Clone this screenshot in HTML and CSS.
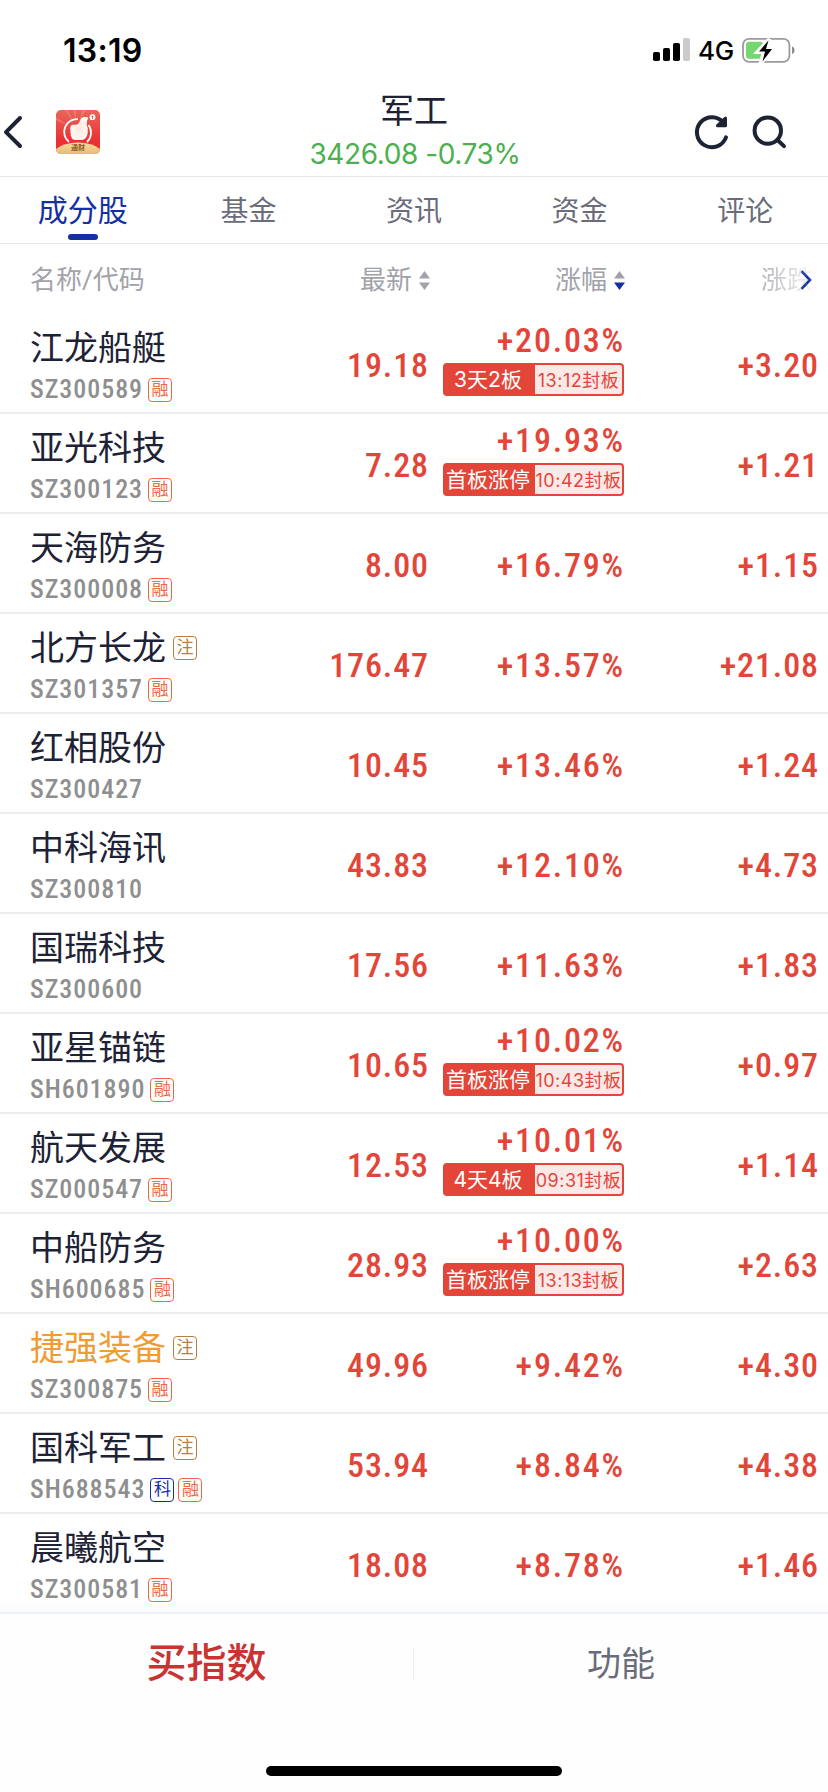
FILE: index.html
```html
<!DOCTYPE html>
<html lang="zh-CN">
<head>
    <meta charset="UTF-8">
    <meta name="viewport" content="width=device-width, initial-scale=1.0">
    <title>军工</title>
    <link rel="stylesheet" href="styles.css">
</head>
<body>

    <!-- Status bar -->
    <div class="status-bar">
        <span class="time">13:19</span>
        <div class="status-right">
            <svg width="37" height="24" viewBox="0 0 37 24">
                <rect x="0" y="14" width="7" height="9" rx="1.8"/>
                <rect x="10" y="10" width="7" height="13" rx="1.8"/>
                <rect x="20" y="5" width="7" height="18" rx="1.8"/>
                <rect x="30" y="0" width="7" height="23" rx="1.8" fill="#cbcbcb"/>
            </svg>
            <span class="network">4G</span>
            <svg class="battery" width="54" height="30" viewBox="0 0 54 30">
                <rect x="1" y="3.8" width="46.4" height="23" rx="6" fill="none" stroke="#9b9b9b" stroke-width="1.8"/>
                <path d="M50 11.5c3.4 1 3.4 6.5 0 7.500z" fill="#8c8c8c"/>
                <rect x="4" y="6.800" width="17.500" height="17" rx="3.400" fill="#76d672"/>
                <path d="M27.500 4L15.500 17h6.500L18.500 28.500 31 14h-6.500z" fill="#000" stroke="#fff" stroke-width="4"/>
                <path d="M26.500 5.500L17 16.500h6L20.500 26.500 30 14h-6z" fill="#000"/>
            </svg>
        </div>
    </div>

    <!-- Header -->
    <header class="header">
        <div class="header-side">
            <svg width="24" height="40" viewBox="0 0 24 40" fill="none" stroke="#1e2235" stroke-width="4" stroke-linecap="round" stroke-linejoin="round">
                <path d="M20 6L6 20.200 20 34"/>
            </svg>
            <div class="app-logo">
                <svg width="44" height="44" viewBox="0 0 44 44">
                    <defs>
                        <linearGradient id="logoRed" x1="0" y1="0" x2="0" y2="1">
                            <stop offset="0" stop-color="#e9665a"/>
                            <stop offset="0.7" stop-color="#eb3035"/>
                        </linearGradient>
                        <linearGradient id="logoGold" x1="0" y1="0" x2="0" y2="1">
                            <stop offset="0" stop-color="#f8d9a0"/>
                            <stop offset="1" stop-color="#e5bb76"/>
                        </linearGradient>
                        <radialGradient id="logoHand">
                            <stop offset="0" stop-color="#fee6d8"/>
                            <stop offset="1" stop-color="#fffaf6"/>
                        </radialGradient>
                    </defs>
                    <rect width="44" height="44" rx="5" fill="url(#logoRed)"/>
                    <path d="M18 14L9 0h3zM20 11L17 0h3zM24 10L26 0h4zM14 17L0 7v3z" fill="#f0887c" opacity="0.6"/>
                    <path d="M22 9.200A12.800 12.800 0 0 0 13 32M32.500 15A12.800 12.800 0 0 1 31 32" fill="none" stroke="#fff" stroke-width="1.800"/>
                    <path d="M14.500 17q0-2 2-2.200h4q3-1 3.500-4.500 1-3 4-3.300 4-.500 4.200 1-2 3-1.500 7 1.500 3 1 6 .200 5-2.500 7.500-1.500 1.500-5 1.500h-4.500q-4 0-4.200-3-1.500-1.500-.500-3-1.500-1.500-.300-3-1-2-.200-4z" fill="url(#logoHand)"/>
                    <circle cx="36.500" cy="7.200" r="2.900" fill="#fff"/>
                    <path d="M35.200 7h2.600L36.500 5.400zM36.100 7h.8v2h-.8z" fill="#eb4b47"/>
                    <path d="M0 39Q8 32.500 22 32.500T44 39q0 5-5 5H5q-5 0-5-5z" fill="url(#logoGold)"/>
                </svg>
                <span class="logo-text">通财</span>
            </div>
        </div>
        <div class="header-title">
            <h1>军工</h1>
            <p>3426.08 -0.73%</p>
        </div>
        <div class="header-side header-actions">
            <svg width="40" height="40" viewBox="0 0 40 40" fill="none" stroke="#1e2235" stroke-width="4" stroke-linecap="round" stroke-linejoin="round">
                <path d="M34 25.400A15 15 0 1 1 31.600 10.800"/>
                <path d="M33.500 6.200v7.500h-8z" fill="#1e2235" stroke-width="3"/>
            </svg>
            <svg width="40" height="40" viewBox="0 0 40 40" fill="none" stroke="#1e2235" stroke-width="4" stroke-linecap="round">
                <circle cx="18.800" cy="18.600" r="13.200"/>
                <path d="M29 28.500l6 5.600"/>
            </svg>
        </div>
    </header>

    <!-- Tabs -->
    <nav class="tabs">
        <a class="tab active">成分股</a>
        <a class="tab">基金</a>
        <a class="tab">资讯</a>
        <a class="tab">资金</a>
        <a class="tab">评论</a>
    </nav>

    <!-- Table head -->
    <div class="table-head">
        <span>名称/代码</span>
        <span class="sort">最新
            <svg width="11" height="19" viewBox="0 0 11 19"><path d="M5.500 0L11 7.500H0z"/><path d="M5.500 19L11 11.500H0z"/></svg>
        </span>
        <span class="sort">涨幅
            <svg width="11" height="19" viewBox="0 0 11 19"><path d="M5.500 0L11 7.500H0z"/><path class="on" d="M5.500 19L11 11.500H0z"/></svg>
        </span>
        <span class="more">
            <span class="fade">涨跌</span>
            <svg width="12" height="20" viewBox="0 0 12 20" fill="none" stroke="#1330a4" stroke-width="2.600"><path d="M1.500 1.200L10 10 1.500 18.800"/></svg>
        </span>
    </div>

    <div class="list" id="list"></div>

    <!-- Bottom bar -->
    <footer class="footer">
        <div class="actions">
            <a class="buy">买指数</a>
            <a class="func">功能</a>
        </div>
        <div class="home-indicator"></div>
    </footer>

    <script>
        var stocks = [
            { name: '江龙船艇', code: 'SZ300589', marks: ['融'], price: '19.18', pct: '+20.03%', diff: '+3.20', board: ['3天2板', '13:12封板'] },
            { name: '亚光科技', code: 'SZ300123', marks: ['融'], price: '7.28', pct: '+19.93%', diff: '+1.21', board: ['首板涨停', '10:42封板'] },
            { name: '天海防务', code: 'SZ300008', marks: ['融'], price: '8.00', pct: '+16.79%', diff: '+1.15' },
            { name: '北方长龙', note: true, code: 'SZ301357', marks: ['融'], price: '176.47', pct: '+13.57%', diff: '+21.08' },
            { name: '红相股份', code: 'SZ300427', marks: [], price: '10.45', pct: '+13.46%', diff: '+1.24' },
            { name: '中科海讯', code: 'SZ300810', marks: [], price: '43.83', pct: '+12.10%', diff: '+4.73' },
            { name: '国瑞科技', code: 'SZ300600', marks: [], price: '17.56', pct: '+11.63%', diff: '+1.83' },
            { name: '亚星锚链', code: 'SH601890', marks: ['融'], price: '10.65', pct: '+10.02%', diff: '+0.97', board: ['首板涨停', '10:43封板'] },
            { name: '航天发展', code: 'SZ000547', marks: ['融'], price: '12.53', pct: '+10.01%', diff: '+1.14', board: ['4天4板', '09:31封板'] },
            { name: '中船防务', code: 'SH600685', marks: ['融'], price: '28.93', pct: '+10.00%', diff: '+2.63', board: ['首板涨停', '13:13封板'] },
            { name: '捷强装备', own: true, note: true, code: 'SZ300875', marks: ['融'], price: '49.96', pct: '+9.42%', diff: '+4.30' },
            { name: '国科军工', note: true, code: 'SH688543', marks: ['科', '融'], price: '53.94', pct: '+8.84%', diff: '+4.38' },
            { name: '晨曦航空', code: 'SZ300581', marks: ['融'], price: '18.08', pct: '+8.78%', diff: '+1.46' }
        ];

        var markClass = { '融': 'rong', '科': 'ke' };

        document.getElementById('list').innerHTML = stocks.map(function (s) {
            var marks = s.marks.map(function (m) {
                return '<i class="mark ' + markClass[m] + '">' + m + '</i>';
            }).join('');
            var board = s.board
                ? '<div class="board"><b>' + s.board[0] + '</b><em>' + s.board[1] + '</em></div>'
                : '';
            return '<div class="row">' +
                '<div class="stock">' +
                    '<div class="name' + (s.own ? ' own' : '') + '">' + s.name + (s.note ? '<i class="mark zhu">注</i>' : '') + '</div>' +
                    '<div class="code"><span>' + s.code + '</span>' + marks + '</div>' +
                '</div>' +
                '<div class="num">' + s.price + '</div>' +
                '<div class="num pct">' + s.pct + board + '</div>' +
                '<div class="num">' + s.diff + '</div>' +
            '</div>';
        }).join('');
    </script>

</body>
</html>
```

FILE: styles.css
```css
* {
    box-sizing: border-box;
    margin: 0;
    padding: 0;
}
body {
    width: 828px;
    height: 1792px;
    overflow: hidden;
    background-color: #fff;
    color: #1e2235;
    font-family: Roboto, "Noto Sans CJK SC", sans-serif;
    display: flex;
    flex-direction: column;
}
svg {
    display: block;
    flex: none;
}
i, em {
    font-style: normal;
}

/* Status bar */
.status-bar {
    height: 88px;
    padding: 12px 32px 0 63px;
    display: flex;
    align-items: center;
    justify-content: space-between;
    font-family: Inter, sans-serif;
    color: #000;
}
.time {
    font-size: 32px;
    font-weight: 600;
    letter-spacing: 0.3px;
}
.status-right {
    display: flex;
    align-items: center;
}
.network {
    font-size: 26px;
    font-weight: 500;
    letter-spacing: -0.3px;
    margin: 0 8px 0 8px;
}

/* Header */
.header {
    height: 89px;
    display: flex;
    border-bottom: 1px solid #e6e6e6;
}
.header-side {
    width: 240px;
    padding-top: 24px;
    display: flex;
    align-items: flex-start;
}
.app-logo {
    position: relative;
    margin: -2px 0 0 32px;
}
.logo-text {
    position: absolute;
    left: 0;
    right: 0;
    top: 33px;
    font-size: 7px;
    line-height: 10px;
    font-weight: 700;
    text-align: center;
    color: #8d5a25;
}
.header-title {
    flex: 1;
    padding-top: 1px;
    text-align: center;
}
h1 {
    font-size: 34px;
    line-height: 44px;
    font-weight: 400;
}
.header-title p {
    font-family: Inter, sans-serif;
    font-size: 28px;
    line-height: 43px;
    letter-spacing: -0.4px;
    padding-left: 2px;
    color: #4caf50;
}
.header-actions {
    justify-content: flex-end;
    gap: 17px;
    padding-right: 39px;
}

/* Tabs */
.tabs {
    height: 67px;
    display: grid;
    grid-template-columns: repeat(5, 1fr);
    border-bottom: 1px solid #e6e6e6;
}
.tab {
    display: flex;
    flex-direction: column;
    align-items: center;
    font-size: 28px;
    line-height: 69px;
    font-weight: 400;
    color: #6b6c7a;
}
.tab.active {
    font-size: 30px;
    line-height: 67px;
    color: #1330a4;
}
.tab.active::after {
    content: "";
    width: 30px;
    height: 6px;
    margin-top: -10px;
    border-radius: 3px;
    background-color: #1330a4;
}

/* Table */
.table-head,
.row {
    display: grid;
    grid-template-columns: 270px 127px 195px 195px;
    padding-left: 30px;
}
.table-head {
    height: 70px;
    font-size: 26px;
    line-height: 72px;
    font-weight: 400;
    color: #a2a2a9;
}
.sort {
    display: flex;
    align-items: center;
    justify-content: flex-end;
    gap: 7px;
    margin-right: -3px;
}
.sort svg {
    fill: #a2a2a9;
}
.sort .on {
    fill: #1330a4;
}
.more {
    display: flex;
    align-items: center;
    justify-content: flex-end;
    padding-right: 5px;
}
.more svg {
    margin-left: -13px;
}
.fade {
    -webkit-mask-image: linear-gradient(90deg, rgba(0, 0, 0, 0.8), rgba(0, 0, 0, 0.1));
    mask-image: linear-gradient(90deg, rgba(0, 0, 0, 0.8), rgba(0, 0, 0, 0.1));
}
.row {
    height: 100px;
    border-bottom: 2px solid #ededed;
}
.row:last-child {
    border-bottom-color: #eff0f3;
    background: linear-gradient(#fff 85%, #fafbfd);
}
.name {
    display: flex;
    align-items: center;
    height: 40px;
    margin-top: 14px;
    font-size: 34px;
    line-height: 38px;
    font-weight: 400;
}
.name.own {
    color: #ee9c33;
}
.name .mark {
    margin: 0 0 0 7px;
}
.code {
    display: flex;
    align-items: center;
    gap: 4px;
    height: 30px;
    margin-top: 7px;
    font-size: 26px;
    font-weight: 500;
    font-stretch: 85%;
    letter-spacing: 0.95px;
    color: #8f8f8f;
}
.code span {
    margin: -2px 1px 0 0;
}
.mark {
    width: 24px;
    height: 24px;
    border: 1px solid;
    border-radius: 4px;
    font-size: 17px;
    line-height: 21px;
    font-weight: 400;
    letter-spacing: 0;
    text-align: center;
}
.rong {
    color: #ef6844;
}
.ke {
    color: #1330a4;
}
.zhu {
    color: #b5803f;
}
.num {
    display: flex;
    flex-direction: column;
    align-items: flex-end;
    justify-content: center;
    margin-right: -2px;
    padding-top: 4px;
    font-size: 34px;
    line-height: 40px;
    font-weight: 500;
    font-stretch: 85%;
    letter-spacing: 0.9px;
    color: #e34639;
}
.pct {
    margin-right: -3px;
    letter-spacing: 1.8px;
}
.board {
    display: flex;
    width: 181px;
    height: 33px;
    margin: 3px 1px 14px 0;
    border: 2px solid #e34639;
    border-radius: 4px;
    background-color: #fbe9e8;
    font-family: Inter, "Noto Sans CJK SC", sans-serif;
    letter-spacing: 0;
    white-space: nowrap;
}
.board b {
    width: 90px;
    padding-right: 4px;
    background-color: #e34639;
    color: #fff;
    font-size: 21px;
    line-height: 29px;
    font-weight: 400;
    text-align: center;
}
.board em {
    flex: 1;
    font-size: 18px;
    line-height: 31px;
    font-weight: 400;
    letter-spacing: 0.5px;
    text-align: center;
}

/* Bottom bar */
.footer {
    flex: 1;
    background-color: #fefefe;
}
.actions {
    display: grid;
    grid-template-columns: 1fr 1fr;
    height: 98px;
    padding-top: 2px;
    align-items: center;
    text-align: center;
}
.buy {
    font-size: 40px;
    line-height: 34px;
    font-weight: 500;
    color: #c93433;
    border-right: 1px solid #eee;
}
.func {
    font-size: 34px;
    line-height: 34px;
    color: #6b6c7a;
}
.home-indicator {
    width: 296px;
    height: 10px;
    margin: 54px auto 0;
    border-radius: 5px;
    background-color: #000;
}
```
